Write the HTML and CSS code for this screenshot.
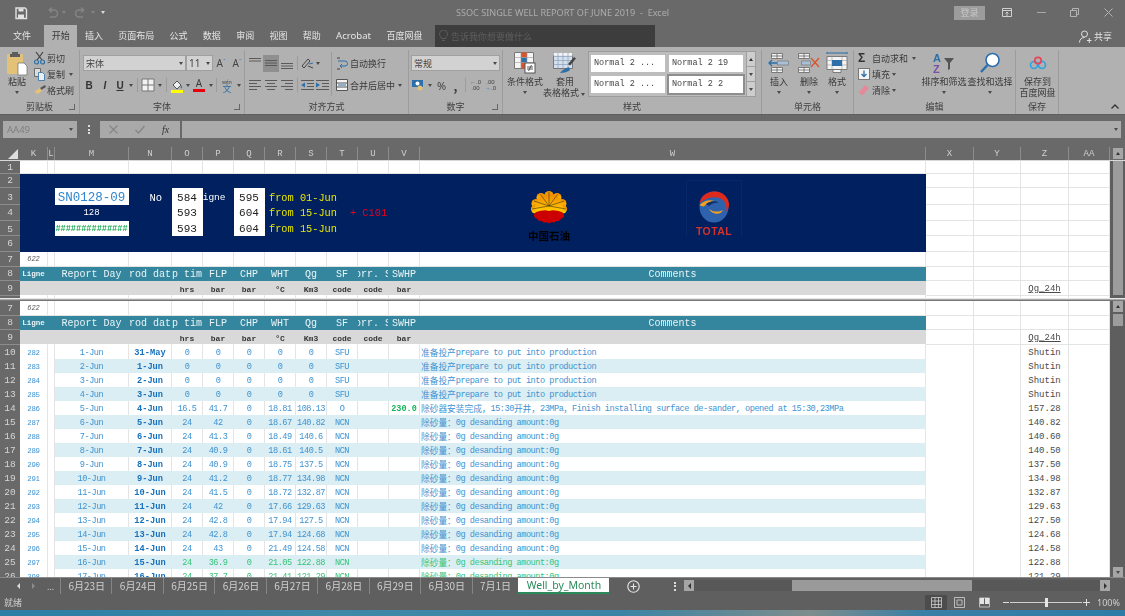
FILE: index.html
```html
<!DOCTYPE html>
<html lang="zh-CN">
<head>
    <meta charset="UTF-8">
    <title>SSOC SINGLE WELL REPORT OF JUNE 2019 - Excel</title>
    <link rel="stylesheet" href="styles.css">
</head>
<body>
<div class="app">

    <!-- title bar -->
    <div class="titlebar">
        <div class="qat">
            <svg class="qat-save" width="14" height="14" viewBox="0 0 14 14"><path d="M2 2h9l1.500 1.500V12.500H2z" fill="none" stroke="#e2e2e2" stroke-width="1.400"/><path d="M4.500 2.500h5v3h-5zM4 8.500h6v4H4z" fill="#e2e2e2"/></svg>
            <svg class="qat-undo" width="14" height="12" viewBox="0 0 14 12"><path d="M4 3h5a3.500 3.500 0 0 1 0 7H5M4 3l3-2.500M4 3l3 2.500" fill="none" stroke="#858585" stroke-width="1.400"/></svg>
            <i class="caret w10 dim"></i>
            <svg class="qat-redo" width="14" height="12" viewBox="0 0 14 12"><path d="M10 3H5a3.500 3.500 0 0 0 0 7h4M10 3L7 .5M10 3L7 5.500" fill="none" stroke="#858585" stroke-width="1.400"/></svg>
            <i class="caret w10 dim"></i>
            <i class="caret w10 light"></i>
        </div>
        <div class="doc-title">SSOC SINGLE WELL REPORT OF JUNE 2019&nbsp; -&nbsp; Excel</div>
        <div class="win-btns">
            <span class="login">登录</span>
            <svg class="win-ribbon" width="10" height="9" viewBox="0 0 10 9"><path d="M.5.500h9v8h-9zM.5 2.500h9M5 8V4M3.500 5.500L5 4l1.500 1.500" fill="none" stroke="#cfcfcf"/></svg>
            <svg class="win-min" width="9" height="9" viewBox="0 0 9 9"><path d="M0 4.500h9" stroke="#a8a8a8"/></svg>
            <svg class="win-max" width="9" height="9" viewBox="0 0 9 9"><path d="M.5 2.500h6v6h-6zM2.500 2.500v-2h6v6h-2" fill="none" stroke="#b4b4b4"/></svg>
            <svg class="win-close" width="9" height="9" viewBox="0 0 9 9"><path d="M.5.500l8 8M8.500.500l-8 8" stroke="#b4b4b4"/></svg>
        </div>
    </div>

    <!-- ribbon tabs -->
    <div class="tabs">
        <span class="tab first">文件</span>
        <span class="tab active">开始</span>
        <span class="tab">插入</span>
        <span class="tab">页面布局</span>
        <span class="tab">公式</span>
        <span class="tab">数据</span>
        <span class="tab">审阅</span>
        <span class="tab">视图</span>
        <span class="tab">帮助</span>
        <span class="tab latin">Acrobat</span>
        <span class="tab">百度网盘</span>
        <div class="search">
            <svg width="9" height="12" viewBox="0 0 9 12"><path d="M2.500 8.500C2 6.500.5 6 .5 4a4 4 0 0 1 8 0c0 2-1.500 2.500-2 4.500zM3 10.500h3" fill="none" stroke="#5c5c5c"/></svg>
            <span>告诉我你想要做什么</span>
        </div>
        <div class="share">
            <svg width="13" height="13" viewBox="0 0 13 13"><circle cx="5.500" cy="4" r="3" fill="none" stroke="#e0e0e0"/><path d="M.5 12.500c0-3 2-5 5-5M8 10.500h4.500M10.250 8v5" fill="none" stroke="#e0e0e0"/></svg>
            <span>共享</span>
        </div>
    </div>

    <!-- ribbon -->
    <div class="ribbon">
        <div class="group g-clip">
            <div class="g-body">
                <div class="big paste">
                    <div class="big-icon">
                        <svg width="23" height="25" viewBox="0 0 23 25"><rect x="1" y="3" width="16" height="20" rx="1" fill="#e3c277"/><path d="M6 3V1h6v2h2v3H4V3z" fill="#5d5d5d"/><path d="M12 12h6l3 3v9h-9z" fill="#fff" stroke="#6a6a6a" stroke-width=".7"/></svg>
                    </div>
                    <span>粘贴</span>
                    <i class="caret"></i>
                </div>
                <div class="stack s-clip">
                    <div class="small">
                        <svg width="14" height="14" viewBox="0 0 14 14"><path d="M3 1l6 8M10 1L4 9" stroke="#444" stroke-width="1.200"/><circle cx="3.500" cy="11" r="2" fill="none" stroke="#2d6fa8" stroke-width="1.200"/><circle cx="9.500" cy="11" r="2" fill="none" stroke="#2d6fa8" stroke-width="1.200"/></svg>
                        <span>剪切</span>
                    </div>
                    <div class="small">
                        <svg width="14" height="14" viewBox="0 0 14 14"><path d="M1.500 1.500h6v8h-6z" fill="#ddd" stroke="#555" stroke-width=".8"/><path d="M5.500 5.500h4l2 2v6h-6z" fill="#e8eef4" stroke="#2d6fa8" stroke-width=".8"/></svg>
                        <span>复制</span>
                        <i class="caret w12"></i>
                    </div>
                    <div class="small">
                        <svg width="14" height="14" viewBox="0 0 14 14"><path d="M7 5l5-3 1 2-5 3z" fill="#555"/><path d="M2 8l5-3 2 3-4 3-1-1-1 1z" fill="#e3c277"/></svg>
                        <span>格式刷</span>
                    </div>
                </div>
            </div>
            <div class="g-label">剪贴板<i class="launch"></i></div>
        </div>

        <div class="group g-font">
            <div class="g-body col">
                <div class="tool-row r1">
                    <div class="select font-name">宋体<i class="caret"></i></div>
                    <div class="select font-size">11<i class="caret"></i></div>
                    <b class="font-grow">A<sup>ˆ</sup></b>
                    <b class="font-grow">A<sup>ˇ</sup></b>
                </div>
                <div class="tool-row r2 tools-font">
                    <b class="t w16 serif">B</b>
                    <b class="t w16 serif ital">I</b>
                    <b class="t w14 serif under">U</b>
                    <i class="caret w8"></i>
                    <i class="vsep"></i>
                    <span class="t w16"><svg width="14" height="14" viewBox="0 0 14 14"><path d="M1 1h12v12H1zM7 1v12M1 7h12" fill="#f2f2f2" stroke="#777"/></svg></span>
                    <i class="caret w8"></i>
                    <i class="vsep"></i>
                    <span class="t w16"><svg width="14" height="15" viewBox="0 0 14 15"><path d="M3 7l4-4 4 4-4 4z" fill="#eee" stroke="#555"/><path d="M11 7c1 1.500 1.500 2 1 3s-2 .5-1-3z" fill="#3a74ad"/><rect x="1" y="12" width="12" height="3" fill="#ffff00"/></svg></span>
                    <i class="caret w6"></i>
                    <span class="t w16 font-a"><b>A</b><i class="bar-red"></i></span>
                    <i class="caret w6 ml1"></i>
                    <i class="vsep"></i>
                    <span class="t w16 phon"><small>wén</small><b>文</b></span>
                    <i class="caret w8"></i>
                </div>
            </div>
            <div class="g-label">字体<i class="launch"></i></div>
        </div>

        <div class="group g-align">
            <div class="g-body">
                <div class="align-left col">
                    <div class="tool-row r1">
                        <span class="t w16"><svg width="12" height="12" viewBox="0 0 12 12"><path d="M0 1.500h12M0 4h12" stroke="#5a5a5a"/></svg></span>
                        <span class="t w16 on"><svg width="12" height="12" viewBox="0 0 12 12"><path d="M0 3.500h12M0 6h12M0 8.500h12" stroke="#5a5a5a"/></svg></span>
                        <span class="t w16"><svg width="12" height="12" viewBox="0 0 12 12"><path d="M0 6.500h12M0 9h12M0 11.500h12" stroke="#5a5a5a"/></svg></span>
                        <i class="vsep"></i>
                        <span class="t w14"><svg width="13" height="13" viewBox="0 0 13 13"><path d="M1 9l6-7 2 2-6 7zM7 9l5 2" fill="none" stroke="#444"/><path d="M8 7l4-1" stroke="#2d6fa8"/></svg></span>
                        <i class="caret w8"></i>
                    </div>
                    <div class="tool-row r2">
                        <span class="t w16"><svg width="12" height="10" viewBox="0 0 12 10"><path d="M0 .5h12M0 3.500h8M0 6.500h12M0 9.500h8" stroke="#5a5a5a"/></svg></span>
                        <span class="t w16"><svg width="12" height="10" viewBox="0 0 12 10"><path d="M0 .5h12M2 3.500h8M0 6.500h12M2 9.500h8" stroke="#5a5a5a"/></svg></span>
                        <span class="t w16"><svg width="12" height="10" viewBox="0 0 12 10"><path d="M0 .5h12M4 3.500h8M0 6.500h12M4 9.500h8" stroke="#5a5a5a"/></svg></span>
                        <i class="vsep"></i>
                        <span class="t w15"><svg width="13" height="10" viewBox="0 0 13 10"><path d="M0 .5h13M6 3.500h7M6 6.500h7M0 9.500h13" stroke="#5a5a5a"/><path d="M4 2.500v5L0 5z" fill="#2d6fa8"/></svg></span>
                        <span class="t w15"><svg width="13" height="10" viewBox="0 0 13 10"><path d="M0 .5h13M6 3.500h7M6 6.500h7M0 9.500h13" stroke="#5a5a5a"/><path d="M0 2.500v5L4 5z" fill="#2d6fa8"/></svg></span>
                    </div>
                </div>
                <div class="align-right col">
                    <div class="tool-row r1 small">
                        <svg width="12" height="13" viewBox="0 0 12 13"><path d="M2 4h7a2 2 0 0 1 0 5H4" fill="none" stroke="#2d6fa8"/><path d="M6 7L4 9l2 2" fill="none" stroke="#2d6fa8"/><path d="M1 1h3M1 12h3" stroke="#444"/></svg>
                        <span>自动换行</span>
                    </div>
                    <div class="tool-row r2 small">
                        <svg width="12" height="12" viewBox="0 0 12 12"><path d="M.5.500h11v11H.5zM.5 4h11M.5 8h11" fill="#f4f4f4" stroke="#555"/><path d="M2 6h8" stroke="#2d6fa8"/></svg>
                        <span>合并后居中</span>
                        <i class="caret w10"></i>
                    </div>
                </div>
            </div>
            <div class="g-label">对齐方式</div>
        </div>

        <div class="group g-num">
            <div class="g-body col">
                <div class="tool-row r1">
                    <div class="select num-fmt">常规<i class="caret"></i></div>
                </div>
                <div class="tool-row r2">
                    <span class="t w14"><svg width="12" height="12" viewBox="0 0 12 12"><rect y="1" width="11" height="7" fill="#2d6fa8"/><circle cx="5.500" cy="4.500" r="2" fill="#fff"/><circle cx="8" cy="9" r="2.500" fill="#e3c277"/></svg></span>
                    <i class="caret w10"></i>
                    <span class="t w13 pct">%</span>
                    <b class="t w15 comma">,</b>
                    <i class="vsep"></i>
                    <span class="t w15 dec"><em>←</em>.0<br>.00</span>
                    <span class="t w15 dec">.00<br><em>→</em>.0</span>
                </div>
            </div>
            <div class="g-label">数字<i class="launch"></i></div>
        </div>

        <div class="group g-styles">
            <div class="g-body">
                <div class="big b-cond">
                    <div class="big-icon">
                        <svg width="22" height="24" viewBox="0 0 22 24"><path d="M.5 1.500h19v16H.5z" fill="#f4f4f4" stroke="#777"/><path d="M7 1.500h6v5H7z" fill="#d8542c"/><path d="M7 6.500h6v5H7z" fill="#2d6fa8"/><path d="M7 11.500h4v6H7z" fill="#d8542c"/><path d="M.5 6.500h19M.5 11.500h19M7 1.500v16M13 1.500v16" stroke="#999" stroke-width=".6"/><rect x="11" y="12" width="10" height="10" fill="#fff" stroke="#555"/><path d="M13 16h6M13 18h6M17.500 14l-3 6" stroke="#333" stroke-width=".8"/></svg>
                    </div>
                    <span>条件格式</span>
                    <i class="caret"></i>
                </div>
                <div class="big b-table">
                    <div class="big-icon">
                        <svg width="24" height="24" viewBox="0 0 24 24"><path d="M.5 1.500h19v16H.5z" fill="#d5e0ee" stroke="#777"/><path d="M.5 1.500h19v3H.5z" fill="#f4f4f4"/><path d="M.5 5.500h19M.5 9.500h19M.5 13.500h19M5 1.500v16M10 1.500v16M15 1.500v16" stroke="#8b9fb8" stroke-width=".7"/><path d="M15 13l6-7 2 1.500-6 7z" fill="#444"/><path d="M7 22c3-4 7-5 9-6l1 3c-2 2-6 3-10 3z" fill="#2d6fa8"/></svg>
                    </div>
                    <span>套用</span>
                    <span>表格格式<i class="caret w8 inl"></i></span>
                </div>
                <div class="gallery">
                    <div class="styles">
                        <div class="style-cell">Normal 2 ...</div>
                        <div class="style-cell">Normal 2 19</div>
                        <div class="style-cell">Normal 2 ...</div>
                        <div class="style-cell sel">Normal 2 2</div>
                    </div>
                    <div class="gal-btns">
                        <i class="caret up"></i>
                        <i class="caret"></i>
                        <i class="caret more"></i>
                    </div>
                </div>
            </div>
            <div class="g-label">样式</div>
        </div>

        <div class="group g-cells">
            <div class="g-body">
                <div class="big b-cell">
                    <div class="big-icon">
                        <svg width="22" height="20" viewBox="0 0 22 20"><path d="M3.500.5h11v5h-11zM3.500 14.500h11v5h-11zM9 .5v5M9 14.500v5M3.500 3h11M3.500 17h11" fill="#f4f4f4" stroke="#666" stroke-width=".8"/><path d="M9.500 8h11v4h-11z" fill="#a9c0d8" stroke="#777" stroke-width=".7"/><path d="M9 10H1M4 7l-3 3 3 3" fill="none" stroke="#2d6fa8" stroke-width="1.300"/></svg>
                    </div>
                    <span>插入</span>
                    <i class="caret"></i>
                </div>
                <div class="big b-cell">
                    <div class="big-icon">
                        <svg width="22" height="20" viewBox="0 0 22 20"><path d="M.5.5h11v5H.5zM.5 14.500h11v5H.5zM6 .5v5M6 14.500v5M.5 3h11M.5 17h11" fill="#f4f4f4" stroke="#666" stroke-width=".8"/><path d="M3.500 8h9v4h-9z" fill="#a9c0d8" stroke="#777" stroke-width=".7"/><path d="M13 5l8 9M21 5l-8 9" stroke="#d8542c" stroke-width="1.300"/></svg>
                    </div>
                    <span>删除</span>
                    <i class="caret"></i>
                </div>
                <div class="big b-cell narrow">
                    <div class="big-icon">
                        <svg width="22" height="22" viewBox="0 0 22 22"><path d="M1 1h20M1 0v2M21 0v2" stroke="#2d6fa8"/><path d="M1 4.500h20v13H1z" fill="#f4f4f4" stroke="#666" stroke-width=".8"/><path d="M6 4.500v13M16 4.500v13M1 8.500h20M1 13h20" stroke="#999" stroke-width=".6"/><rect x="6" y="8" width="10" height="6" fill="#2d6fa8"/><path d="M7 17.500h8v3H7z" fill="#f4f4f4" stroke="#666" stroke-width=".8"/></svg>
                    </div>
                    <span>格式</span>
                    <i class="caret"></i>
                </div>
            </div>
            <div class="g-label">单元格</div>
        </div>

        <div class="group g-edit">
            <div class="g-body">
                <div class="stack s-edit">
                    <div class="small">
                        <b class="sigma">Σ</b>
                        <span>自动求和</span>
                        <i class="caret w12"></i>
                    </div>
                    <div class="small">
                        <svg width="12" height="12" viewBox="0 0 12 12"><rect x=".5" y=".5" width="11" height="11" fill="#f4f4f4" stroke="#777"/><path d="M6 2.500v6M3.500 6L6 8.500 8.500 6" fill="none" stroke="#2d6fa8" stroke-width="1.300"/></svg>
                        <span>填充</span>
                        <i class="caret w8"></i>
                    </div>
                    <div class="small">
                        <svg width="12" height="12" viewBox="0 0 12 12"><path d="M1 8l6-7 4 3-6 7H3z" fill="#e58a9a"/></svg>
                        <span>清除</span>
                        <i class="caret w8"></i>
                    </div>
                </div>
                <div class="big b-find">
                    <div class="big-icon">
                        <svg width="22" height="22" viewBox="0 0 22 22"><text x="0" y="10" class="az a">A</text><text x="0" y="21" class="az z">Z</text><path d="M11 6h10l-4 5v6l-2 1v-7z" fill="#555"/></svg>
                    </div>
                    <span>排序和筛选</span>
                    <i class="caret"></i>
                </div>
                <div class="big b-find">
                    <div class="big-icon">
                        <svg width="22" height="22" viewBox="0 0 22 22"><circle cx="13.500" cy="8" r="6.500" fill="#fff" stroke="#2a6fb0" stroke-width="1.600"/><path d="M8.500 13L2 20" stroke="#2a6fb0" stroke-width="2.400"/></svg>
                    </div>
                    <span>查找和选择</span>
                    <i class="caret"></i>
                </div>
            </div>
            <div class="g-label">编辑</div>
        </div>

        <div class="group g-save">
            <div class="g-body">
                <div class="big b-save">
                    <div class="big-icon">
                        <svg width="18" height="14" viewBox="0 0 18 14"><circle cx="5" cy="9" r="3.500" fill="none" stroke="#2fa3e0" stroke-width="1.700"/><circle cx="13" cy="9" r="3.500" fill="none" stroke="#2fa3e0" stroke-width="1.700"/><circle cx="9" cy="4.500" r="3.200" fill="none" stroke="#e8455a" stroke-width="1.700"/></svg>
                    </div>
                    <span>保存到</span>
                    <span>百度网盘</span>
                </div>
            </div>
            <div class="g-label">保存</div>
        </div>

        <div class="collapse">
            <svg width="8" height="5" viewBox="0 0 8 5"><path d="M.5 4.500L4 1l3.500 3.500" fill="none" stroke="#333" stroke-width="1.300"/></svg>
        </div>
    </div>

    <!-- formula bar -->
    <div class="formula">
        <div class="namebox">AA49<i class="caret"></i></div>
        <div class="fdots"><i></i><i></i><i></i></div>
        <div class="fbtns">
            <svg width="9" height="9" viewBox="0 0 9 9"><path d="M.5.500l8 8M8.500.500l-8 8" stroke="#868686" stroke-width="1.200"/></svg>
            <svg width="10" height="9" viewBox="0 0 10 9"><path d="M.5 5l3 3 6-7" fill="none" stroke="#868686" stroke-width="1.400"/></svg>
            <em class="fx">fx</em>
        </div>
        <div class="finput"><i class="caret"></i></div>
    </div>

    <!-- worksheet -->
    <div class="sheet">
        <div class="row colhead">
            <div><i class="corner"></i></div>
            <div>K</div><div>L</div><div>M</div><div>N</div><div>O</div><div>P</div><div>Q</div><div>R</div><div>S</div><div>T</div><div>U</div><div>V</div><div>W</div><div>X</div><div>Y</div><div>Z</div><div>AA</div>
            <div class="sb-top"><i class="sb-btn"><i class="caret up"></i></i></div>
        </div>

        <div class="pane top">
            <div class="rows">
                <div class="row h13 white">
                    <div class="rh">1</div>
                    <div></div><div></div><div></div><div></div><div></div><div></div><div></div><div></div><div></div><div></div><div></div><div></div><div></div><div></div><div></div><div></div><div></div>
                </div>
                <div class="row h14 banner">
                    <div class="rh">2</div>
                    <div class="navy all"></div>
                    <div></div><div></div><div></div><div></div>
                </div>
                <div class="row h17 banner pad3">
                    <div class="rh">3</div>
                    <div class="navy kl"></div>
                    <div class="box sn">SN0128-09</div>
                    <div class="navy no">No</div>
                    <div class="box num">584</div>
                    <div class="navy lig"><span>Ligne</span></div>
                    <div class="box num">595</div>
                    <div class="navy from"><span>from 01-Jun</span></div>
                    <div></div><div></div><div></div><div></div>
                </div>
                <div class="row h16 banner">
                    <div class="rh">4</div>
                    <div class="navy kl"></div>
                    <div class="navy id">128</div>
                    <div class="navy"></div>
                    <div class="box num">593</div>
                    <div class="navy"></div>
                    <div class="box num">604</div>
                    <div class="navy from"><span>from 15-Jun</span><span class="plus">+ C101</span></div>
                    <div></div><div></div><div></div><div></div>
                </div>
                <div class="row h15 banner pad2">
                    <div class="rh">5</div>
                    <div class="navy kl"></div>
                    <div class="box hash">##############</div>
                    <div class="navy"></div>
                    <div class="box num">593</div>
                    <div class="navy"></div>
                    <div class="box num">604</div>
                    <div class="navy from"><span>from 15-Jun</span></div>
                    <div></div><div></div><div></div><div></div>
                </div>
                <div class="row h16 banner">
                    <div class="rh">6</div>
                    <div class="navy all"></div>
                    <div></div><div></div><div></div><div></div>
                </div>
                <div class="row h15 white">
                    <div class="rh">7</div>
                    <div class="ital-num">622</div>
                    <div></div><div></div><div></div><div></div><div></div><div></div><div></div><div></div><div></div><div></div><div></div><div></div><div></div><div></div><div></div><div></div>
                </div>
                <div class="row teal">
                    <div class="rh">8</div>
                    <div class="lg">Ligne</div><div></div><div>Report Day</div><div>Prod date</div><div>Up time</div><div>FLP</div><div>CHP</div><div>WHT</div><div>Qg</div><div>SF</div><div>Corr. SF</div><div>SWHP</div><div>Comments</div>
                    <div></div><div></div><div></div><div></div>
                </div>
                <div class="row h15 grey">
                    <div class="rh">9</div>
                    <div class="yel"></div><div></div><div></div><div></div><div>hrs</div><div>bar</div><div>bar</div><div class="deg">°C</div><div>Km3</div><div>code</div><div>code</div><div>bar</div><div></div>
                    <div></div><div></div><div class="qg"><u>Qg_24h</u></div><div></div>
                </div>
                <div class="row data">
                    <div class="rh">10</div>
                    <div class="idx">282</div><div></div><div>1-Jun</div><div class="bd">31-May</div><div>0</div><div>0</div><div>0</div><div>0</div><div>0</div><div>SFU</div><div></div><div></div><div class="cm"><span class="zh">准备投产</span>prepare to put into production</div><div></div><div></div><div class="qg">Shutin</div><div></div>
                </div>

                <div class="logo-cnpc">
                    <svg width="36" height="36" viewBox="0 0 36 36">
                        <defs>
                            <linearGradient id="petal" x1="0" y1="0" x2="0" y2="1"><stop offset="0" stop-color="#f08a00"/><stop offset=".65" stop-color="#ffb400"/><stop offset="1" stop-color="#ffd800"/></linearGradient>
                        </defs>
                        <g fill="url(#petal)">
                            <circle cx="18" cy="4.500" r="4.500"/><circle cx="10" cy="6.500" r="4.500"/><circle cx="26" cy="6.500" r="4.500"/><circle cx="5" cy="12.500" r="4.500"/><circle cx="31" cy="12.500" r="4.500"/><circle cx="4.500" cy="18" r="4.500"/><circle cx="31.500" cy="18" r="4.500"/>
                            <path d="M4 18C4 8 10 3 18 3s14 5 14 15l-4 4H8z"/>
                        </g>
                        <path d="M18 15V1M18 15L9.500 3.500M18 15L26.500 3.500M18 15L3 10M18 15l15-5M18 15L1 18M18 15l17 3" stroke="#3a3a20" stroke-width=".6"/>
                        <path d="M3 23c0-2 1-3 2.500-3.500C10 18 14 17 18 18.500c4-1.500 8-.5 12.500 1C32 20 33 21 33 23c0 1.500-1 3-3 3.200-1 2-3 2.800-5 2.200-1 1.800-3 2-4 1.200-1.500 1.500-4.500 1.500-6 0-1 .8-3 .6-4-1.200-2 .6-4-.2-5-2.200-2-.2-3-1.700-3-3.200z" fill="#cc0000" transform="translate(0 1.500)"/>
                    </svg>
                    <b>中国石油</b>
                </div>
                <div class="logo-total">
                    <svg width="32" height="36" viewBox="0 0 32 36">
                        <ellipse cx="16" cy="19" rx="14.500" ry="15.500" fill="#2f62ad"/>
                        <path d="M1.500 15C3 7 10 3 18 3.500c8 .5 13 7 13 13 0 3-1 5-2.500 7 .5-5-1-10-5-12.500C18 8 9 9 1.500 15z" fill="#dd2a1c"/>
                        <path d="M1.500 17c4-4 10-6 15-4-3 0-8 2-10 5-1.500 1-3.500 0-5-1z" fill="#f2a01e"/>
                        <path d="M11 21c4 3 9 3.500 14 1-2 4-5 4-8 3.500-3-1-5-2.500-6-4.500z" fill="#f2a01e"/>
                        <path d="M8 16c4-3 9-3.500 13-1.500-2.500 0-8 1-10 3.500z" fill="#12306a"/>
                    </svg>
                    <span>TOTAL</span>
                </div>
            </div>
            <div class="vscroll"><i class="sb-thumb long"></i></div>
        </div>

        <div class="splitter"></div>

        <div class="pane bottom">
            <div class="rows">
                <div class="row h15 white">
                    <div class="rh">7</div>
                    <div class="ital-num">622</div>
                    <div></div><div></div><div></div><div></div><div></div><div></div><div></div><div></div><div></div><div></div><div></div><div></div><div></div><div></div><div></div><div></div>
                </div>
                <div class="row teal">
                    <div class="rh">8</div>
                    <div class="lg">Ligne</div><div></div><div>Report Day</div><div>Prod date</div><div>Up time</div><div>FLP</div><div>CHP</div><div>WHT</div><div>Qg</div><div>SF</div><div>Corr. SF</div><div>SWHP</div><div>Comments</div>
                    <div></div><div></div><div></div><div></div>
                </div>
                <div class="row h15 grey">
                    <div class="rh">9</div>
                    <div class="yel"></div><div></div><div></div><div></div><div>hrs</div><div>bar</div><div>bar</div><div class="deg">°C</div><div>Km3</div><div>code</div><div>code</div><div>bar</div><div></div>
                    <div></div><div></div><div class="qg"><u>Qg_24h</u></div><div></div>
                </div>

                <div class="row data">
                    <div class="rh">10</div><div class="idx">282</div><div></div><div>1-Jun</div><div class="bd">31-May</div><div>0</div><div>0</div><div>0</div><div>0</div><div>0</div><div>SFU</div><div></div><div></div><div class="cm"><span class="zh">准备投产</span>prepare to put into production</div><div></div><div></div><div class="qg">Shutin</div><div></div>
                </div>
                <div class="row data alt">
                    <div class="rh">11</div><div class="idx">283</div><div></div><div>2-Jun</div><div class="bd">1-Jun</div><div>0</div><div>0</div><div>0</div><div>0</div><div>0</div><div>SFU</div><div></div><div></div><div class="cm"><span class="zh">准备投产</span>prepare to put into production</div><div></div><div></div><div class="qg">Shutin</div><div></div>
                </div>
                <div class="row data">
                    <div class="rh">12</div><div class="idx">284</div><div></div><div>3-Jun</div><div class="bd">2-Jun</div><div>0</div><div>0</div><div>0</div><div>0</div><div>0</div><div>SFU</div><div></div><div></div><div class="cm"><span class="zh">准备投产</span>prepare to put into production</div><div></div><div></div><div class="qg">Shutin</div><div></div>
                </div>
                <div class="row data alt">
                    <div class="rh">13</div><div class="idx">285</div><div></div><div>4-Jun</div><div class="bd">3-Jun</div><div>0</div><div>0</div><div>0</div><div>0</div><div>0</div><div>SFU</div><div></div><div></div><div class="cm"><span class="zh">准备投产</span>prepare to put into production</div><div></div><div></div><div class="qg">Shutin</div><div></div>
                </div>
                <div class="row data">
                    <div class="rh">14</div><div class="idx">286</div><div></div><div>5-Jun</div><div class="bd">4-Jun</div><div>16.5</div><div>41.7</div><div>0</div><div>18.81</div><div>108.13</div><div>O</div><div></div><div class="swhp">230.0</div><div class="cm"><span class="zh">除砂器安装完成&#xFF0C;</span>15:30<span class="zh">开井&#xFF0C;</span>23MPa<span class="zh">&#xFF0C;</span>Finish installing surface de-sander, opened at 15:30,23MPa</div><div></div><div></div><div class="qg">157.28</div><div></div>
                </div>
                <div class="row data alt">
                    <div class="rh">15</div><div class="idx">287</div><div></div><div>6-Jun</div><div class="bd">5-Jun</div><div>24</div><div>42</div><div>0</div><div>18.67</div><div>140.82</div><div>NCN</div><div></div><div></div><div class="cm"><span class="zh">除砂量&#xFF1A;</span>0g desanding amount:0g</div><div></div><div></div><div class="qg">140.82</div><div></div>
                </div>
                <div class="row data">
                    <div class="rh">16</div><div class="idx">288</div><div></div><div>7-Jun</div><div class="bd">6-Jun</div><div>24</div><div>41.3</div><div>0</div><div>18.49</div><div>140.6</div><div>NCN</div><div></div><div></div><div class="cm"><span class="zh">除砂量&#xFF1A;</span>0g desanding amount:0g</div><div></div><div></div><div class="qg">140.60</div><div></div>
                </div>
                <div class="row data alt">
                    <div class="rh">17</div><div class="idx">289</div><div></div><div>8-Jun</div><div class="bd">7-Jun</div><div>24</div><div>40.9</div><div>0</div><div>18.61</div><div>140.5</div><div>NCN</div><div></div><div></div><div class="cm"><span class="zh">除砂量&#xFF1A;</span>0g desanding amount:0g</div><div></div><div></div><div class="qg">140.50</div><div></div>
                </div>
                <div class="row data">
                    <div class="rh">18</div><div class="idx">290</div><div></div><div>9-Jun</div><div class="bd">8-Jun</div><div>24</div><div>40.9</div><div>0</div><div>18.75</div><div>137.5</div><div>NCN</div><div></div><div></div><div class="cm"><span class="zh">除砂量&#xFF1A;</span>0g desanding amount:0g</div><div></div><div></div><div class="qg">137.50</div><div></div>
                </div>
                <div class="row data alt">
                    <div class="rh">19</div><div class="idx">291</div><div></div><div>10-Jun</div><div class="bd">9-Jun</div><div>24</div><div>41.2</div><div>0</div><div>18.77</div><div>134.98</div><div>NCN</div><div></div><div></div><div class="cm"><span class="zh">除砂量&#xFF1A;</span>0g desanding amount:0g</div><div></div><div></div><div class="qg">134.98</div><div></div>
                </div>
                <div class="row data">
                    <div class="rh">20</div><div class="idx">292</div><div></div><div>11-Jun</div><div class="bd">10-Jun</div><div>24</div><div>41.5</div><div>0</div><div>18.72</div><div>132.87</div><div>NCN</div><div></div><div></div><div class="cm"><span class="zh">除砂量&#xFF1A;</span>0g desanding amount:0g</div><div></div><div></div><div class="qg">132.87</div><div></div>
                </div>
                <div class="row data alt">
                    <div class="rh">21</div><div class="idx">293</div><div></div><div>12-Jun</div><div class="bd">11-Jun</div><div>24</div><div>42</div><div>0</div><div>17.66</div><div>129.63</div><div>NCN</div><div></div><div></div><div class="cm"><span class="zh">除砂量&#xFF1A;</span>0g desanding amount:0g</div><div></div><div></div><div class="qg">129.63</div><div></div>
                </div>
                <div class="row data">
                    <div class="rh">22</div><div class="idx">294</div><div></div><div>13-Jun</div><div class="bd">12-Jun</div><div>24</div><div>42.8</div><div>0</div><div>17.94</div><div>127.5</div><div>NCN</div><div></div><div></div><div class="cm"><span class="zh">除砂量&#xFF1A;</span>0g desanding amount:0g</div><div></div><div></div><div class="qg">127.50</div><div></div>
                </div>
                <div class="row data alt">
                    <div class="rh">23</div><div class="idx">295</div><div></div><div>14-Jun</div><div class="bd">13-Jun</div><div>24</div><div>42.8</div><div>0</div><div>17.94</div><div>124.68</div><div>NCN</div><div></div><div></div><div class="cm"><span class="zh">除砂量&#xFF1A;</span>0g desanding amount:0g</div><div></div><div></div><div class="qg">124.68</div><div></div>
                </div>
                <div class="row data">
                    <div class="rh">24</div><div class="idx">296</div><div></div><div>15-Jun</div><div class="bd">14-Jun</div><div>24</div><div>43</div><div>0</div><div>21.49</div><div>124.58</div><div>NCN</div><div></div><div></div><div class="cm"><span class="zh">除砂量&#xFF1A;</span>0g desanding amount:0g</div><div></div><div></div><div class="qg">124.58</div><div></div>
                </div>
                <div class="row data alt ok">
                    <div class="rh">25</div><div class="idx">297</div><div></div><div>16-Jun</div><div class="bd">15-Jun</div><div>24</div><div>36.9</div><div>0</div><div>21.05</div><div>122.88</div><div>NCN</div><div></div><div></div><div class="cm"><span class="zh">除砂量&#xFF1A;</span>0g desanding amount:0g</div><div></div><div></div><div class="qg">122.88</div><div></div>
                </div>
                <div class="row data ok">
                    <div class="rh">26</div><div class="idx">298</div><div></div><div>17-Jun</div><div class="bd">16-Jun</div><div>24</div><div>37.7</div><div>0</div><div>21.41</div><div>121.29</div><div>NCN</div><div></div><div></div><div class="cm"><span class="zh">除砂量&#xFF1A;</span>0g desanding amount:0g</div><div></div><div></div><div class="qg">121.29</div><div></div>
                </div>
            </div>
            <div class="vscroll">
                <i class="sb-btn"><i class="caret up"></i></i>
                <i class="sb-thumb"></i>
                <i class="sb-btn end"><i class="caret"></i></i>
            </div>
        </div>
    </div>

    <!-- sheet tabs -->
    <div class="tabbar">
        <div class="tab-nav"><i class="arr left"></i><i class="arr right"></i><span>...</span></div>
        <span class="stab">6月23日</span>
        <span class="stab">6月24日</span>
        <span class="stab">6月25日</span>
        <span class="stab">6月26日</span>
        <span class="stab">6月27日</span>
        <span class="stab">6月28日</span>
        <span class="stab">6月29日</span>
        <span class="stab">6月30日</span>
        <span class="stab">7月1日</span>
        <span class="stab current">Well_by_Month</span>
        <svg class="add-sheet" width="13" height="13" viewBox="0 0 13 13"><circle cx="6.500" cy="6.500" r="5.700" fill="none" stroke="#e8e8e8" stroke-width="1.100"/><path d="M6.500 3.500v6M3.500 6.500h6" stroke="#e8e8e8" stroke-width="1.100"/></svg>
        <div class="fdots tab-dots"><i></i><i></i><i></i></div>
        <div class="hscroll">
            <i class="hs-btn"><i class="arr left dark"></i></i>
            <i class="hs-gap"></i>
            <i class="hs-thumb"></i>
            <i class="hs-fill"></i>
            <i class="hs-btn"><i class="arr right dark"></i></i>
        </div>
    </div>

    <!-- status bar -->
    <div class="statusbar">
        <span class="ready">就绪</span>
        <div class="views">
            <span class="view on"><svg width="11" height="11" viewBox="0 0 11 11"><path d="M.5.500h10v10H.5zM.5 4h10M.5 7.500h10M4 .5v10M7.500.5v10" fill="none" stroke="#cfcfcf" stroke-width=".8"/></svg></span>
            <span class="view"><svg width="11" height="11" viewBox="0 0 11 11"><path d="M.5.500h10v10H.5zM3 3h5v5H3z" fill="none" stroke="#bdbdbd"/></svg></span>
            <span class="view"><svg width="11" height="11" viewBox="0 0 11 11"><path d="M.5 1h10v9H.5z" fill="none" stroke="#bdbdbd"/><path d="M1 1h4v6H1zM6 1h4v6H6z" fill="#e4e4e4"/></svg></span>
        </div>
        <div class="zoom">
            <i class="z-minus"></i>
            <div class="z-track"><i class="z-thumb"></i></div>
            <i class="z-plus"></i>
            <span>100%</span>
        </div>
    </div>

    <div class="wallpaper"></div>
</div>
</body>
</html>
```

FILE: styles.css
```css
* {
    box-sizing: border-box;
}

body {
    margin: 0;
    overflow: hidden;
    background: #666;
}

i, em {
    font-style: normal;
}

.app {
    width: 1125px;
    height: 616px;
    overflow: hidden;
    font-family: "Noto Sans CJK SC", "Noto Sans", sans-serif;
    font-size: 9px;
    color: #3a3a3a;
    filter: blur(.35px);
    --cols: 20px 28px 7px 74px 43px repeat(8, 31px) 506px 48px 47px 48px 41px;
    --mono: "Liberation Mono", "Noto Sans CJK SC", monospace;
}

/* small triangles used all over */
.caret {
    display: inline-flex;
    align-items: center;
    justify-content: center;
    flex: none;
}

.caret::after {
    content: "";
    border-style: solid;
    border-color: #4a4a4a transparent transparent;
    border-width: 3px 2.500px 0;
}

.caret.up::after {
    border-color: transparent transparent #333;
    border-width: 0 2.500px 3px;
}

.caret.dim::after { border-top-color: #858585; }
.caret.light::after { border-top-color: #dcdcdc; }
.caret.inl { display: inline-flex; height: 8px; }

.w6 { width: 6px; }
.w8 { width: 8px; }
.w10 { width: 10px; }
.w12 { width: 12px; }
.w13 { width: 13px; }
.w14 { width: 14px; }
.w15 { width: 15px; }
.w16 { width: 16px; }
.ml1 { margin-left: 1px; }

/* title bar */
.titlebar {
    height: 25px;
    background: #696969;
    display: flex;
    align-items: center;
}

.qat {
    width: 456px;
    flex: none;
    display: flex;
    align-items: center;
}

.qat-save { margin-left: 14px; }
.qat-undo { margin-left: 17px; }
.qat-redo { margin-left: 5px; }

.doc-title {
    font-family: "Noto Sans", sans-serif;
    font-size: 9.100px;
    color: #acacac;
    white-space: nowrap;
}

.win-btns {
    margin-left: auto;
    display: flex;
    align-items: center;
}

.login {
    width: 31px;
    height: 14px;
    background: #9c9c9c;
    color: #c8c8c8;
    text-align: center;
    line-height: 14px;
}

.win-ribbon { margin-left: 17px; }
.win-min { margin-left: 25px; }
.win-max { margin-left: 24px; }
.win-close { margin: 0 12px 0 25px; }

/* ribbon tabs */
.tabs {
    height: 22px;
    background: #696969;
    display: flex;
    align-items: center;
    color: #e4e4e4;
}

.tab {
    height: 22px;
    line-height: 22px;
    padding: 0 7.650px;
    flex: none;
}

.tab.first { padding: 0 13px; }
.tab.latin { font-size: 9.600px; font-family: "Noto Sans", sans-serif; }

.tab.active {
    background: #b1b1b1;
    color: #3a3a3a;
}

.search {
    margin-left: 5px;
    width: 220px;
    height: 22px;
    background: #3d3d3d;
    color: #5e5e5e;
    display: flex;
    align-items: center;
    gap: 3px;
    padding-left: 4px;
}

.share {
    margin-left: auto;
    margin-right: 13px;
    display: flex;
    align-items: center;
    gap: 2px;
}

/* ribbon */
.ribbon {
    height: 67px;
    background: #b1b1b1;
    display: flex;
    position: relative;
}

.group {
    margin-top: 3px;
    flex: none;
    border-right: 1px solid #9c9c9c;
    position: relative;
}

.g-clip { width: 80px; }
.g-font { width: 165px; }
.g-align { width: 164px; }
.g-num { width: 94px; }
.g-styles { width: 259px; }
.g-cells { width: 92px; }
.g-edit { width: 162px; }
.g-save { width: 43px; }

.g-body {
    height: 50px;
    display: flex;
}

.col {
    flex-direction: column;
}

.g-label {
    height: 14px;
    line-height: 14px;
    text-align: center;
    color: #404040;
}

.launch {
    position: absolute;
    right: 4px;
    bottom: 4px;
    width: 6px;
    height: 6px;
    border-left: 1px solid #666;
    border-bottom: 1px solid #666;
    transform: scaleX(-1);
}

.big {
    display: flex;
    flex-direction: column;
    align-items: center;
    flex: none;
}

.big-icon {
    height: 26px;
    display: flex;
    align-items: center;
}

.big span {
    height: 11px;
    line-height: 11px;
    white-space: nowrap;
}

.big > .caret {
    height: 11px;
}

.stack {
    display: flex;
    flex-direction: column;
    flex: none;
}

.small {
    height: 16px;
    display: flex;
    align-items: center;
    white-space: nowrap;
}

.paste { width: 24px; margin-left: 5px; }
.s-clip { margin-left: 4px; }
.s-clip .small svg { margin-right: 0; }

.tool-row {
    display: flex;
    align-items: center;
    height: 16px;
}

.tool-row.r1 { margin-top: 5px; }
.tool-row.r2 { margin-top: 6px; }

.t {
    display: flex;
    align-items: center;
    justify-content: center;
    height: 16px;
    flex: none;
}

.t.on {
    background: #8f8f8f;
    height: 17px;
}

.vsep {
    width: 5px;
    height: 14px;
    flex: none;
    background: linear-gradient(#9c9c9c, #9c9c9c) center / 1px 100% no-repeat;
}

.serif { font-family: "Liberation Sans", sans-serif; font-size: 10px; color: #333; }
.ital { font-style: italic; }
.under { text-decoration: underline; }

.select {
    height: 16px;
    background: #d2d2d2;
    border: 1px solid #a0a0a0;
    display: flex;
    align-items: center;
    padding-left: 2px;
    flex: none;
    color: #444;
}

.select .caret { margin-left: auto; width: 9px; }

.g-font .r1 { padding-left: 3px; }
.tools-font { padding-left: 1px; }
.font-name { width: 103px; }
.font-size { width: 27px; font-family: "Noto Sans", sans-serif; font-size: 10px; }

.font-grow {
    width: 16px;
    text-align: center;
    font-family: "Noto Sans", sans-serif;
    font-weight: 400;
    font-size: 10px;
    color: #444;
    flex: none;
    white-space: nowrap;
}

.font-grow sup {
    font-size: 6px;
    color: #2d6fa8;
    line-height: 0;
}

.font-a {
    flex-direction: column;
    font-family: "Noto Sans", sans-serif;
    font-size: 10px;
    line-height: 11px;
}

.font-a b { font-weight: 400; }

.bar-red {
    width: 12px;
    height: 3px;
    background: #e8000d;
}

.phon {
    flex-direction: column;
    line-height: 7px;
    color: #2d6fa8;
}

.phon small { font-size: 5px; color: #444; }
.phon b { font-weight: 400; font-size: 9px; }

.align-left {
    width: 87px;
    padding-left: 2px;
    border-right: 1px solid #9c9c9c;
    height: 44px;
    margin-top: 2px;
}

.align-left .r1 { margin-top: 3px; }

.align-right {
    padding-left: 4px;
    height: 44px;
    margin-top: 2px;
}

.align-right .r1 { margin-top: 3px; }
.align-right svg { margin-right: 2px; }

.g-num .tool-row { padding-left: 2px; }
.num-fmt { width: 89px; }
.pct { font-family: "Noto Sans", sans-serif; font-size: 11px; color: #444; }
.comma { font-size: 12px; }

.dec {
    display: block;
    font-family: "Liberation Sans", sans-serif;
    font-size: 6px;
    line-height: 6px;
    text-align: center;
    height: auto;
    color: #444;
}

.dec em { color: #2d6fa8; }

.b-cond { width: 36px; margin-left: 4px; }
.b-table { width: 44px; margin-left: 0; }

.gallery {
    width: 168px;
    height: 46px;
    margin: 1px 0 0 1px;
    background: #bdbdbd;
    border: 1px solid #9c9c9c;
    display: flex;
    flex: none;
}

.styles {
    display: grid;
    grid-template-columns: 74px 74px;
    grid-template-rows: 17px 17px;
    gap: 4px 4px;
    padding: 3px 2px;
    width: 157px;
}

.style-cell {
    background: #fff;
    font-family: var(--mono);
    font-size: 8.500px;
    padding-left: 3px;
    line-height: 17px;
    color: #444;
    white-space: nowrap;
    overflow: hidden;
}

.style-cell.sel {
    outline: 2px solid #8e8e8e;
}

.gal-btns {
    flex: 1;
    display: flex;
    flex-direction: column;
    border-left: 1px solid #a0a0a0;
    background: #cdcdcd;
}

.gal-btns .caret {
    flex: 1;
    border-bottom: 1px solid #a0a0a0;
}

.gal-btns .more { border-bottom: 0; }

.b-cell { width: 30px; }
.g-cells .b-cell:first-child { margin-left: 2px; }
.b-cell.narrow { width: 26px; }

.s-edit { width: 63px; margin-left: 4px; }
.s-edit .small > :first-child { margin-right: 2px; }
.sigma { width: 12px; font-size: 12px; font-family: "Liberation Sans", sans-serif; color: #333; }
.b-find { width: 46px; }

.az {
    font-family: "Liberation Sans", sans-serif;
    font-size: 11px;
    font-weight: 700;
}

.az.a { fill: #2d6fa8; }
.az.z { fill: #7b4ea8; }

.b-save { width: 43px; }

.collapse {
    position: absolute;
    right: 6px;
    bottom: 5px;
    line-height: 0;
}

/* formula bar */
.formula {
    height: 33px;
    background: #696969;
    border-top: 1px solid #5f5f5f;
    padding: 6px 3px 9px;
    display: flex;
    align-items: stretch;
}

.namebox {
    width: 74px;
    background: #a9a9a9;
    color: #7f7f7f;
    font-family: "Noto Sans", sans-serif;
    font-size: 9.500px;
    display: flex;
    align-items: center;
    padding-left: 4px;
}

.namebox .caret { margin-left: auto; width: 12px; }

.fdots {
    display: flex;
    flex-direction: column;
    justify-content: center;
    align-items: center;
    gap: 1.500px;
    width: 23px;
}

.fdots i {
    width: 2px;
    height: 2px;
    background: #dcdcdc;
}

.fbtns {
    width: 80px;
    background: #a9a9a9;
    display: flex;
    align-items: center;
    gap: 17px;
    padding-left: 9px;
}

.fx {
    font-family: "Liberation Serif", serif;
    font-style: italic;
    font-size: 10px;
    color: #333;
}

.finput {
    margin-left: 2px;
    width: 939px;
    background: #ababab;
    display: flex;
    align-items: center;
    justify-content: flex-end;
    padding-right: 3px;
}

/* worksheet */
.sheet {
    height: 430px;
    background: #636363;
    font-family: var(--mono);
}

.row {
    display: grid;
    grid-template-columns: var(--cols);
    height: 14px;
    width: 1110px;
}

.h13 { height: 13px; }
.h14 { height: 14px; }
.h15 { height: 15px; }
.h16 { height: 16px; }
.h17 { height: 17px; }

.row > div {
    display: flex;
    align-items: center;
    justify-content: center;
    overflow: hidden;
    white-space: nowrap;
    border-right: 1px solid #e4e4e4;
    border-bottom: 1px solid #e4e4e4;
    background: #fff;
}

.row.colhead {
    height: 14px;
    width: 1125px;
    grid-template-columns: var(--cols) 15px;
    border-bottom: 1px solid #d8d8d8;
}

.colhead > div {
    background: #696969;
    color: #cfcfcf;
    font-size: 9px;
    border-color: #8c8c8c;
    border-bottom: 0;
}

.colhead > div:first-child {
    align-items: flex-end;
    justify-content: flex-end;
    border-right: 0;
}

.corner {
    width: 0;
    height: 0;
    margin: 0 2px 1px 0;
    border-style: solid;
    border-width: 0 0 10px 10px;
    border-color: transparent transparent #dedede;
}

.row > .rh {
    background: #696969;
    color: #d6d6d6;
    font-size: 9.500px;
    letter-spacing: 0;
    border-right: 0;
    border-bottom: 1px solid #8c8c8c;
}

.pane {
    display: flex;
    overflow: hidden;
}

.pane.top { height: 137px; }
.pane.bottom { height: 276px; }

.rows {
    width: 1110px;
    flex: none;
    position: relative;
    overflow: hidden;
}

.vscroll {
    width: 15px;
    display: flex;
    flex-direction: column;
    align-items: center;
    background: #5e5e5e;
    position: relative;
}

.sb-top {
    padding-top: 1px;
    align-items: flex-start !important;
    border: 0 !important;
}

.sb-btn {
    width: 10px;
    height: 11px;
    background: #a6a6a6;
    display: flex;
    align-items: center;
    justify-content: center;
    flex: none;
}

.sb-btn.end {
    margin-top: auto;
    height: 10px;
}

.sb-thumb {
    width: 10px;
    height: 12px;
    margin-top: 2px;
    background: #9c9c9c;
    flex: none;
}

.sb-thumb.long {
    height: 134px;
    margin-top: 0;
}

.splitter {
    height: 3px;
    background: #a8a8a8;
    border-top: 1px solid #e8e8e8;
    border-bottom: 1px solid #777;
}

/* banner at the top of the sheet */
.banner > div {
    color: #fff;
}

.banner > .navy {
    background: #002060;
    border-color: #002060;
    font-size: 10.500px;
}

.banner .all { grid-column: 2 / span 13; }
.banner .kl { grid-column: 2 / span 2; }
.banner .from {
    grid-column: 9 / span 6;
    justify-content: flex-start;
    padding-left: 4px;
    color: #e6e600;
    font-size: 10.300px !important;
    gap: 13px;
}

.plus { color: #e8001c; }

.banner > .no {
    justify-content: flex-end;
    padding-right: 9px;
}

.banner > .box {
    background: #fff;
    border-color: #fff;
    color: #222;
    position: relative;
    z-index: 1;
}

.pad3 > div { padding-top: 3px; }
.pad2 > div { padding-top: 2px; }

.banner > .sn { color: #2e86d0; font-size: 12.500px; }
.banner > .hash { color: #18a94e; font-weight: 700; font-size: 8.600px; }
.banner > .num { font-size: 11px; }
.banner > .id { font-size: 9px; }

.banner .lig {
    justify-content: flex-start;
    font-size: 9.500px;
}

.banner .lig span { margin-left: -6px; }

/* logos lie over the banner cells */
.logo-cnpc {
    position: absolute;
    left: 528px;
    top: 30px;
    width: 42px;
    display: flex;
    flex-direction: column;
    align-items: center;
    color: #000;
    line-height: 12px;
}

.logo-cnpc b {
    font-family: "Noto Sans CJK SC", sans-serif;
    font-size: 10.500px;
    margin-top: 3px;
    white-space: nowrap;
}

.logo-total {
    position: absolute;
    left: 686px;
    top: 19px;
    width: 56px;
    height: 57px;
    border: 1px solid #062768;
    border-bottom: 0;
    display: flex;
    flex-direction: column;
    align-items: center;
    padding-top: 7px;
}

.logo-total span {
    font-family: "Liberation Sans", sans-serif;
    font-weight: 700;
    font-size: 10.500px;
    letter-spacing: .4px;
    line-height: 11px;
    color: #d6322a;
    margin-top: 2px;
}

/* column header rows */
.teal > div:nth-child(n+2):nth-child(-n+14) {
    background: #33869e;
    border-color: #33869e;
    color: #eaf3f6;
    font-size: 10px;
    padding-top: 1px;
}

.teal > .lg {
    font-size: 7.500px !important;
    font-weight: 700;
}

.grey > div:nth-child(n+2):nth-child(-n+14) {
    background: #d9d9d9;
    border-right-color: #d9d9d9;
    border-bottom-color: #fff;
    color: #333;
    font-size: 8px;
    font-weight: 700;
    padding-top: 2px;
}

.grey > .yel:nth-child(2) {
    background: #ffff00;
    border-right-color: #ffff00;
}

.grey > .deg:nth-child(n) { font-weight: 400; font-size: 7px; }

.grey > .qg { padding-top: 2px; }

.ital-num {
    font-style: italic;
    font-size: 7px;
    color: #555;
}

.row > .qg {
    font-size: 9px;
    letter-spacing: 0;
    color: #4a4a4a;
}

.data > div {
    color: #3f93d2;
    font-size: 8.600px;
    letter-spacing: -.48px;
    padding-top: 1px;
}

.data > .idx { font-size: 7.400px; letter-spacing: -.2px; }

.data > .bd {
    font-size: 8.700px;
    letter-spacing: 0;
    font-weight: 700;
    color: #1670bd;
}

.data > .cm {
    justify-content: flex-start;
    padding-left: 1px;
    overflow: visible;
}

.zh { font-size: 8.700px; letter-spacing: 0; }

.data > .swhp {
    color: #17b45a;
    font-weight: 700;
    font-size: 8.500px;
    letter-spacing: 0;
}

.alt > div:nth-child(n+4):nth-child(-n+14) {
    background: #daeef3;
    border-color: #daeef3;
}

.ok > div:nth-child(n+6):nth-child(-n+14) {
    color: #35c479;
}

/* sheet tabs */
.tabbar {
    height: 18px;
    background: #5f5f5f;
    border-top: 1px solid #8a8a8a;
    display: flex;
    align-items: flex-start;
    color: #cfcfcf;
    font-size: 10px;
}

.tab-nav {
    width: 60px;
    height: 16px;
    display: flex;
    align-items: center;
    padding-left: 17px;
    gap: 12px;
    flex: none;
    font-family: "Noto Sans", sans-serif;
    font-size: 9px;
}

.arr {
    width: 0;
    height: 0;
    border-style: solid;
    border-color: transparent;
    border-width: 3px 0;
    flex: none;
}

.arr.left { border-right: 3.500px solid #dcdcdc; }
.arr.right { border-left: 3.500px solid #8d8d8d; }
.arr.dark.left, .arr.dark.right { border-left-color: #333; border-right-color: #333; }

.stab {
    height: 16px;
    line-height: 15px;
    padding: 0 7.400px;
    border-left: 1px solid #858585;
    white-space: nowrap;
    flex: none;
    margin-right: -1px;
}

.stab.current {
    width: 91px;
    padding: 0;
    text-align: center;
    border: 0;
    border-bottom: 2px solid #2a8a5a;
    background: #fff;
    color: #2a8a5a;
    font-family: "Noto Sans", sans-serif;
    font-size: 10.500px;
    margin-left: 1px;
}

.add-sheet {
    margin: 2px 0 0 19px;
    flex: none;
}

.tab-dots {
    height: 16px;
    width: 5px;
    margin-left: 32px;
    flex: none;
}

.hscroll {
    margin: 2px 15px 0 auto;
    width: 426px;
    height: 11px;
    background: #585858;
    display: flex;
    flex: none;
}

.hs-btn {
    width: 10px;
    background: #a6a6a6;
    display: flex;
    align-items: center;
    justify-content: center;
    flex: none;
}

.hs-gap { width: 98px; flex: none; }
.hs-thumb { width: 180px; background: #9a9a9a; flex: none; }
.hs-fill { flex: 1; }

/* status bar */
.statusbar {
    height: 15px;
    background: #5f5f5f;
    display: flex;
    align-items: center;
    color: #cfcfcf;
    font-size: 9px;
}

.ready { padding-left: 4px; }

.views {
    margin-left: auto;
    display: flex;
    height: 15px;
}

.view {
    width: 25px;
    display: flex;
    align-items: center;
    justify-content: center;
}

.view.on { background: #4c4c4c; width: 22px; margin-right: 0; }

.zoom {
    width: 128px;
    display: flex;
    align-items: center;
    padding-left: 6px;
    font-family: "Noto Sans", sans-serif;
    font-size: 9px;
}

.z-minus {
    width: 6px;
    height: 1px;
    background: #e0e0e0;
}

.z-track {
    width: 72px;
    height: 1px;
    background: #cfcfcf;
    margin: 0 0 0 1px;
    position: relative;
}

.z-thumb {
    position: absolute;
    left: 35px;
    top: -4px;
    width: 3px;
    height: 9px;
    background: #e6e6e6;
}

.z-plus {
    width: 7px;
    height: 7px;
    margin: 0 7px 0 1px;
    background:
        linear-gradient(#e0e0e0, #e0e0e0) center / 100% 1px no-repeat,
        linear-gradient(#e0e0e0, #e0e0e0) center / 1px 100% no-repeat;
}

/* desktop behind the window */
.wallpaper {
    height: 6px;
    background: linear-gradient(90deg, #2c7ea5, #3f88a8 30%, #3b84a5 55%, #7f8d8c 72%, #3a7fa6 82%, #2e7ca6);
}
```
